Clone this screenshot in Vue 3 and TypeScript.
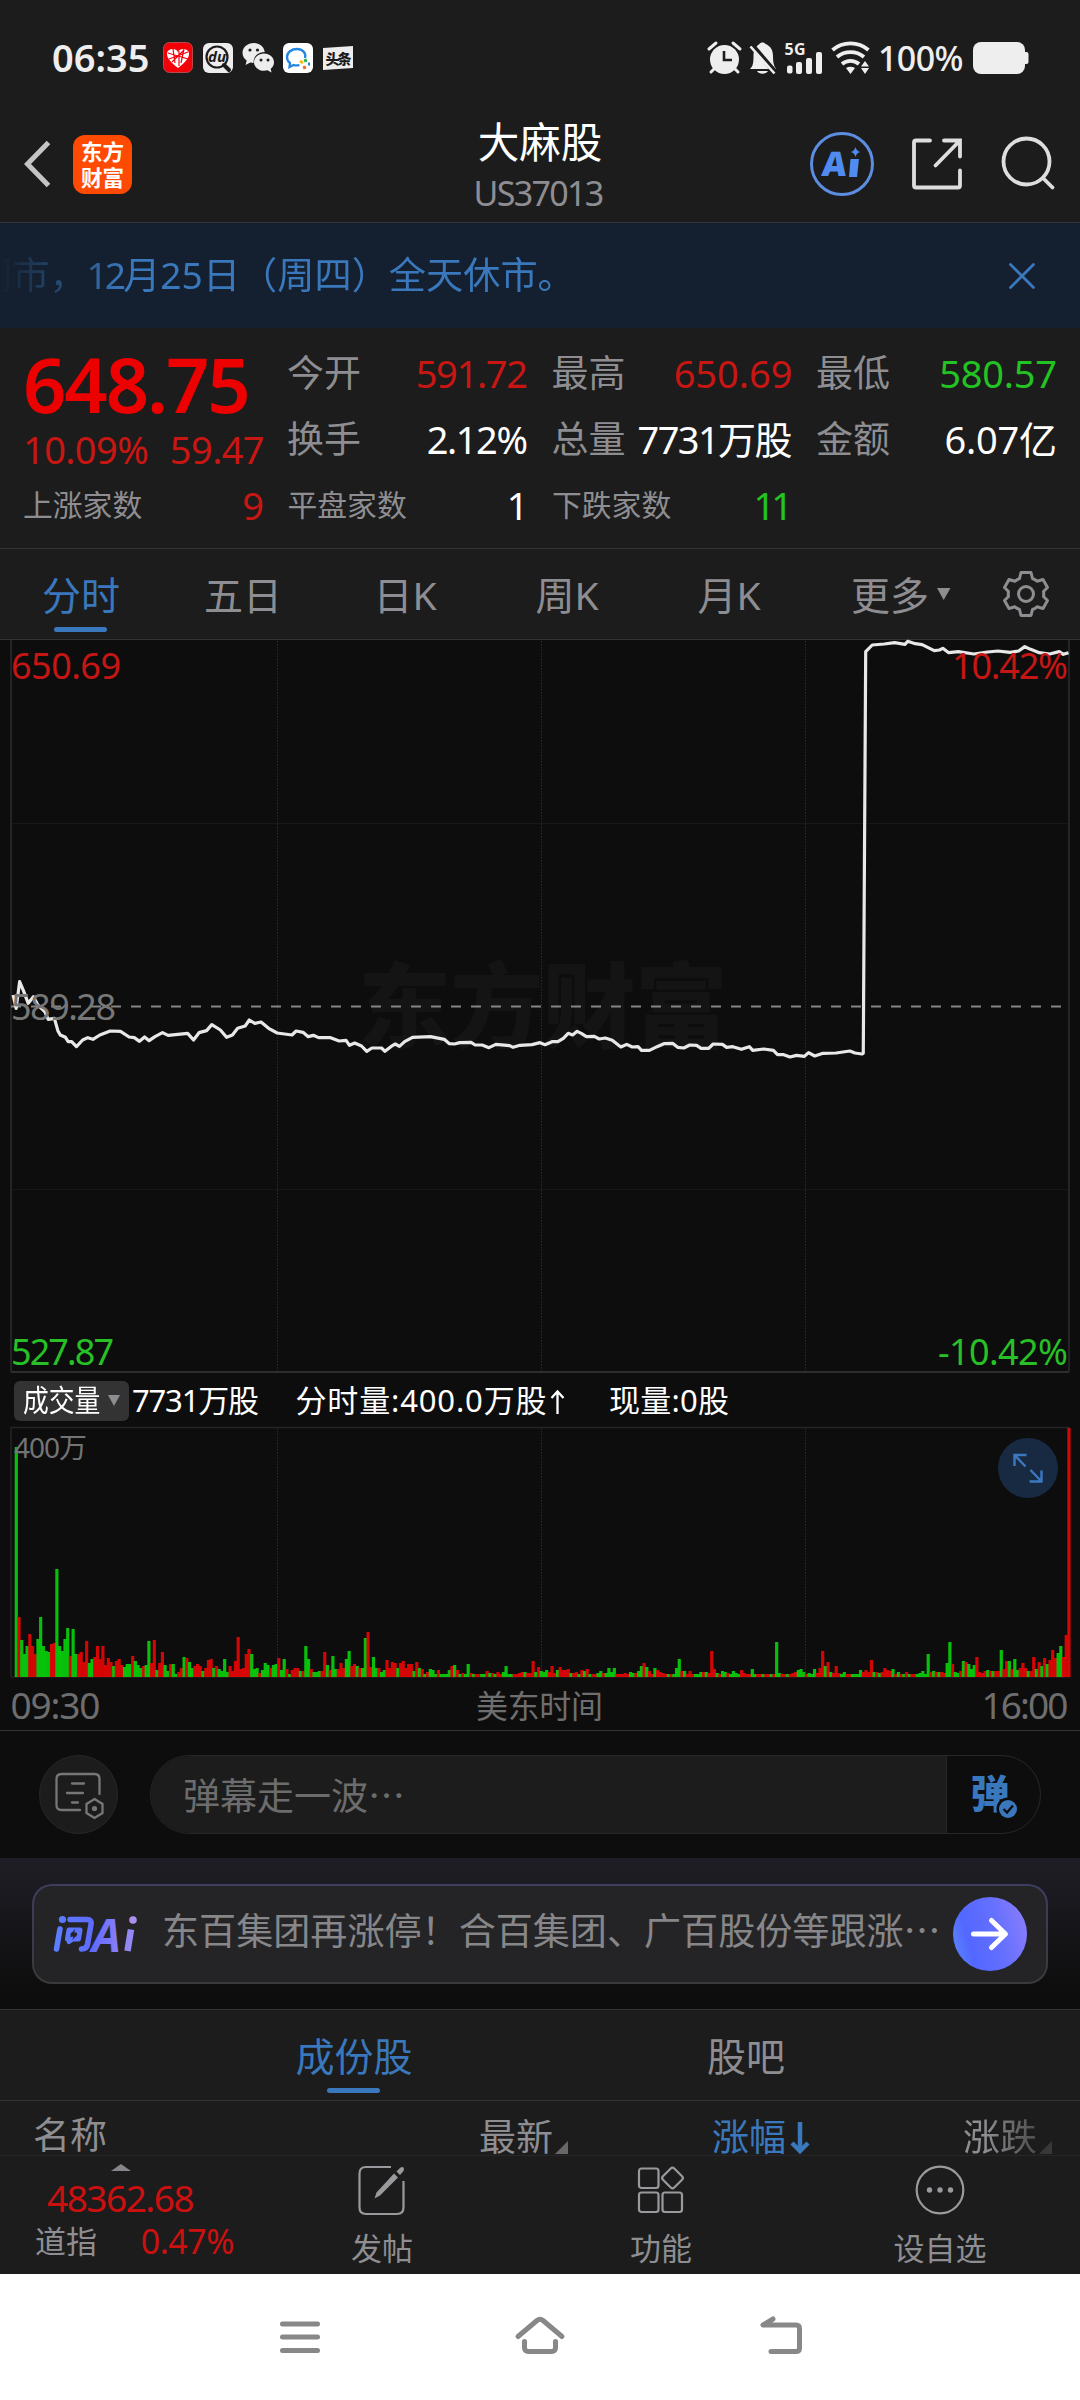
<script setup lang="ts">
interface Cell {
  label: string
  value: string
  tone: 'up' | 'down' | 'flat'
  spacing: number
}

const cells: Cell[] = [
  { label: '今开', value: '591.72', tone: 'up', spacing: -1.3 },
  { label: '最高', value: '650.69', tone: 'up', spacing: 0 },
  { label: '最低', value: '580.57', tone: 'down', spacing: -0.2 },
  { label: '换手', value: '2.12%', tone: 'flat', spacing: -1.4 },
  { label: '总量', value: '7731万股', tone: 'flat', spacing: -1.6 },
  { label: '金额', value: '6.07亿', tone: 'flat', spacing: -0.2 },
]

const counts: Cell[] = [
  { label: '上涨家数', value: '9', tone: 'up', spacing: 0 },
  { label: '平盘家数', value: '1', tone: 'flat', spacing: 0 },
  { label: '下跌家数', value: '11', tone: 'down', spacing: -4 },
]

/* Trailing letter-spacing is cancelled so values stay flush right. */
const fit = (c: Cell) => ({ letterSpacing: `${c.spacing}px`, marginRight: `${-c.spacing}px` })

const periods: string[] = ['分时', '五日', '日K', '周K', '月K']

/* Intraday price path before the jump, in thirds of a pixel. */
const sessionLow =
  '38,195 47,235 57,155 68,182 82,220 97,200 110,225 130,245 140,268 158,265 168,302 175,315 190,322 198,335 208,335 222,350 240,330 255,323 270,328 290,315 320,303 350,304 375,321 390,323 405,334 420,321 433,332 450,320 472,308 488,316 545,310 562,330 578,308 600,302 615,284 640,300 658,322 675,315 690,295 712,288 724,270 740,280 758,276 780,295 805,309 848,315 860,303 880,307 895,320 910,316 925,323 960,323 985,333 1005,331 1015,346 1030,339 1050,348 1065,364 1080,354 1108,354 1118,364 1135,350 1148,342 1160,349 1175,335 1198,322 1250,320 1290,328 1305,341 1320,342 1335,338 1368,337 1380,345 1400,345 1420,353 1440,343 1480,347 1490,352 1510,346 1545,344 1568,338 1583,344 1603,335 1620,335 1636,325 1650,310 1663,315 1676,304 1688,310 1703,320 1726,319 1740,327 1758,324 1778,331 1803,351 1820,343 1836,351 1853,350 1863,361 1886,361 1908,350 1928,341 1953,340 1968,352 1986,354 2003,345 2023,346 2036,355 2058,355 2071,342 2098,343 2110,352 2128,350 2153,358 2176,350 2186,361 2218,357 2246,361 2258,374 2276,374 2294,381 2313,376 2336,379 2348,368 2366,378 2390,370 2428,369 2468,363 2483,369 2503,372 2507,370'
const sessionHigh =
  '2514,-835 2533,-855 2568,-858 2598,-862 2628,-857 2636,-866 2658,-859 2678,-856 2713,-838 2728,-840 2738,-845 2755,-832 2783,-835 2828,-828 2868,-834 2898,-837 2933,-833 2958,-837 2976,-850 2993,-842 3018,-832 3048,-828 3076,-835 3088,-827 3103,-832'
const priceLine = `${sessionLow} ${sessionHigh}`

/* One entry per minute: direction followed by bar height. */
const minutes =
  'g230 r60 g37 g23 g31 r43 r31 r23 g38 g60 g31 g26 g25 r33 r34 g108 g31 g26 g38 g49 r21 g48 g23 r23 r25 r15 r36 g14 g18 r20 r31 r18 r31 r12 r19 r15 g11 r16 r18 r12 g10 g13 g13 r21 g16 g12 g9 r11 g12 g36 r14 r37 g7 r14 r25 g12 g6 r13 g13 g3 r5 r9 g20 r19 g15 g9 r11 r13 r11 g6 r9 r17 r18 g9 r11 g8 g6 g18 g5 r11 r6 r16 r40 r8 r9 r23 r28 g23 g8 g9 r4 g7 g14 g12 r9 g12 g13 r19 g7 g18 r8 g3 r7 r9 r9 g6 r6 g31 g18 r8 g5 g5 g6 r6 r25 g12 r7 g21 g8 r8 r14 r9 g18 g26 r11 r13 g11 r9 g9 g39 r45 r10 g20 g9 r9 g5 g7 r17 r9 r15 r14 g9 r14 r16 r9 r13 r13 g6 r15 g9 r8 g3 r5 g8 g7 g3 r7 g3 g3 g3 g7 r11 g12 r7 g3 r4 g3 g13 r4 g3 r3 r3 g3 g3 r6 g4 r4 g3 r5 r3 g5 g11 g3 g3 r3 r3 r4 r5 g5 r4 r4 r16 g5 r10 g6 g5 g7 r5 r11 r4 g7 r10 r7 r7 r8 g4 r4 r5 g3 r7 g6 r8 g3 r3 r3 g4 g6 r4 g4 g9 g5 g9 r3 r3 r3 r4 r3 g5 g4 r4 g6 g11 r14 g10 r6 r3 g9 r7 r5 r4 r3 g3 r3 g3 g9 g18 r6 g6 r3 r6 r3 g3 g3 g5 r5 g5 r4 r26 r8 g4 r3 g6 g5 r4 g3 g6 g4 g3 r7 r4 r3 r3 g8 g3 r3 r3 g3 r3 r3 g3 r3 g35 g4 r3 r3 g3 r3 r4 r5 g7 g8 g5 r3 g4 g3 g8 r4 r9 r26 g11 r15 g5 r4 r11 r4 g3 g5 r3 r3 g3 g3 g3 g7 r5 r7 r5 r17 g5 r5 g4 r5 r9 r7 r6 g8 r3 g5 r3 g3 r5 g3 r3 r3 g3 g4 g6 g3 g23 r5 g6 r5 g5 r5 r4 g14 g35 r13 g5 g4 r6 g16 r15 g13 g8 g12 r20 r5 r4 r6 g7 r6 g6 r6 r6 g27 r8 r16 g16 r8 g18 g7 r9 r14 r9 g6 r6 r20 g8 r15 g11 r19 g13 r17 r27 r19 g24 g31 r20 r42 r249'

const bars = minutes.split(' ').map((m, i) => ({
  x: 14.7 + i * 2.706,
  h: Number(m.slice(1)),
  fill: m[0] === 'g' ? '#08d30b' : '#e80503',
}))

const gridX: number[] = [277.5, 541.5, 805.5]
</script>

<template>
  <div class="screen">
    <div class="status">
      <span class="clock">06:35</span>
      <svg class="apps" width="190" height="32" viewBox="0 0 190 32">
        <rect x="0.5" y="0.5" width="29" height="30" rx="6" fill="#f40009" stroke="#b54a4a" />
        <path d="M15 26C9 21 4 17 4 12c0-5 8-7 11-2 3-5 11-3 11 2 0 5-5 9-11 14z" fill="#fff" />
        <path d="M5 11l20 6M6 17l19-7M10 7l2 14M16 9v15M21 7l-3 14M9 20l12-12" stroke="#f40009" stroke-width="1.2" fill="none" />
        <rect x="40" y="1" width="30" height="30" rx="6" fill="#ededed" />
        <circle cx="54" cy="15" r="10.5" fill="none" stroke="#1c1c1c" stroke-width="2.2" />
        <path d="M61 23l5 5" stroke="#1c1c1c" stroke-width="4" stroke-linecap="round" />
        <text x="54" y="20" text-anchor="middle" class="du">du</text>
        <path d="M91 1c-6.500 0-11.500 4.300-11.500 9.800 0 3.200 1.600 5.900 4.200 7.700L82.500 23l4.800-2.500c1 .3 2.200.5 3.400.5-.8-6 4-10.700 11-10.900C101 4.500 96.500 1 91 1z" fill="#ededed" />
        <path d="M101 11.500c-5.500 0-10 4-10 8.700s4.500 8.600 10 8.600c1.300 0 2.500-.2 3.500-.5l4 2.200-.8-3.700c2-1.600 3.300-3.900 3.300-6.600 0-4.800-4.500-8.700-10-8.700z" fill="#ededed" />
        <g fill="#1c1c1c"><circle cx="87" cy="8" r="1.600" /><circle cx="94.500" cy="8" r="1.600" /><circle cx="98" cy="18" r="1.500" /><circle cx="105" cy="18" r="1.500" /></g>
        <rect x="120" y="1" width="30" height="30" rx="6" fill="#fff" />
        <path d="M142 16c1.500-5-2.500-9-8-9-5.500 0-10 3.300-10 8 0 3 1.500 5 3 6l-.5 4 4-2c2 .6 4 .6 6 0" fill="none" stroke="#2486e0" stroke-width="2.300" />
        <path d="M137 19l3 2" stroke="#f9b916" stroke-width="3" /><path d="M142 17l1 3" stroke="#25b14b" stroke-width="3" /><path d="M145 22h2" stroke="#2486e0" stroke-width="3" /><path d="M141 24l1 3" stroke="#ef6a2c" stroke-width="3" />
        <path d="M160 6l30-2v22l-30 2z" fill="#ededed" />
        <text x="162.500" y="21.500" class="tt" textLength="26">头条</text>
      </svg>
      <svg class="sys" width="162" height="34" viewBox="708 42 162 34">
        <g fill="#eee">
          <circle cx="724.500" cy="60.500" r="14.500" />
          <path d="M709 50l7-6M740 50l-7-6M715 69l-4 4M734 69l4 4" stroke="#eee" stroke-width="3" stroke-linecap="round" />
          <path d="M724 52v9h8" stroke="#1c1c1c" stroke-width="2.600" fill="none" />
          <path d="M750 70c3-3 3.500-6 3.500-13 0-7 3-10 6-12 1-2 5-2 6 0 5 2 7.500 6 7.500 12 0 7 1 10 3 13zM757 72h11c-2 3.500-9 3.500-11 0z" />
          <path d="M751 45l24 28" stroke="#1c1c1c" stroke-width="5" /><path d="M750.500 47.500l24 27" stroke="#eee" stroke-width="2.600" />
          <rect x="787" y="66.500" width="5.500" height="8" rx="2" /><rect x="796" y="63" width="6" height="12" rx="2" /><rect x="806" y="59" width="6" height="16" rx="2" /><rect x="816" y="53" width="6" height="22" rx="2" />
          <text x="784.500" y="56" class="g5" textLength="21">5G</text>
        </g>
        <g fill="none" stroke="#eee" stroke-width="3.800"><path d="M832.500 51a28 28 0 0 1 36 0M837 58a21 21 0 0 1 27 0M842 65a13 13 0 0 1 17 0" /></g>
        <path d="M846 69q4.500-2.500 9 0l-4.500 6zM865 62l4 5.500h-8zM861 69h8l-4 6z" fill="#eee" />
      </svg>
      <span class="pct">100%</span>
      <svg class="batt" width="56" height="32" viewBox="0 0 56 32"><rect width="52" height="32" rx="8" fill="#eee" /><rect x="46" y="10" width="9.500" height="12" rx="2" fill="#eee" /></svg>
    </div>

    <header class="head">
      <div class="head-left">
        <svg width="30" height="50" viewBox="0 0 30 50"><path d="M26.500 3.500L5.500 25l21 21.500" fill="none" stroke="#c4c4c4" stroke-width="5" /></svg>
        <div class="brand"><span>东方</span><span>财富</span></div>
      </div>
      <div class="title">
        <div class="name">大麻股</div>
        <div class="code">US37013</div>
      </div>
      <svg class="head-icons" width="246" height="66" viewBox="810 131 246 66">
        <circle cx="842" cy="164" r="30.500" fill="none" stroke="#5b8de0" stroke-width="3" />
        <text x="0" y="0" transform="translate(821 175.500) skewX(-6)" class="ai">A</text>
        <path d="M850.500 159h8.500l-2 18h-8z" fill="#508bf0" />
        <path d="M855.500 147q1 4 4.500 5-3.500 1-4.500 5-1-4-4.500-5 3.500-1 4.500-5z" fill="#508bf0" />
        <g fill="none" stroke="#dedede" stroke-width="3.800" stroke-linecap="round">
          <path d="M930 140.500h-14q-2 0-2 2v43q0 2 2 2h42q2 0 2-2v-15M944 140.500h16v16M960 140.500l-24.500 25" />
          <circle cx="1026.500" cy="161.500" r="23" /><path d="M1043 178l9.500 9.500" />
        </g>
      </svg>
    </header>

    <div class="notice">
      <div class="ticker">闭市，<i class="n12">12</i>月<i class="n25">25</i>日（周四）全天休市。</div>
      <svg width="26" height="26" viewBox="0 0 26 26"><path d="M1.500 1.500l23 23M24.500 1.500l-23 23" stroke="#3a78bd" stroke-width="2.800" stroke-linecap="round" /></svg>
    </div>

    <section class="quote">
      <div class="main">
        <div class="price">648.75</div>
        <div class="change"><span>10.09%</span><span>59.47</span></div>
      </div>
      <div class="cells">
        <div v-for="c in cells" :key="c.label" class="cell">
          <span class="lab">{{ c.label }}</span>
          <span :class="['val', c.tone]" :style="fit(c)">{{ c.value }}</span>
        </div>
      </div>
      <div class="counts">
        <div v-for="c in counts" :key="c.label" class="cell">
          <span class="lab small">{{ c.label }}</span>
          <span :class="['val', c.tone]" :style="fit(c)">{{ c.value }}</span>
        </div>
      </div>
    </section>

    <nav class="periods">
      <div v-for="(p, i) in periods" :key="p" :class="['period', { on: i === 0 }]">{{ p }}</div>
      <div class="period more">更多<svg width="14" height="12" viewBox="0 0 14 12"><path d="M0 0h13.500L6.700 12z" fill="#8e8e92" /></svg></div>
      <div class="gear">
        <svg width="48" height="50" viewBox="-24 -25 48 50" fill="none" stroke="#8e8e92" stroke-width="3" stroke-linejoin="round">
          <path d="M-5-21.500H5L6.500-15.500Q9-14.500 11-12.800L17-14.500 21.500-6.500 17.500-2.500Q18 0 17.500 2.500L21.500 6.500 17 14.500 11 12.800Q9 14.500 6.500 15.500L5 21.500H-5L-6.500 15.500Q-9 14.500-11 12.800L-17 14.500-21.500 6.500-17.500 2.500Q-18 0-17.500-2.500L-21.500-6.500-17-14.500-11-12.800Q-9-14.500-6.500-15.500Z" />
          <circle r="7.500" />
        </svg>
      </div>
    </nav>

    <svg class="price-chart" width="1080" height="734" viewBox="0 640 1080 734">
      <text x="358" y="1041" class="mark" textLength="370">东方财富</text>
      <g stroke="#2b2b2b" stroke-width="1" stroke-dasharray="1.500 1.500">
        <path v-for="x in gridX" :key="x" :d="`M${x} 641V1372`" />
      </g>
      <path d="M12 823.500H1068M12 1189.500H1068" stroke="#181818" />
      <path d="M11 640V1372M1069 640V1372" stroke="#242424" stroke-width="2" />
      <path d="M11 1372H1069" stroke="#2e2e2e" stroke-width="2" />
      <path d="M11 1006.500H1063" stroke="#858585" stroke-width="2.200" stroke-dasharray="10 10" />
      <g transform="translate(0 930) scale(.34435 .33333)">
        <polyline :points="priceLine" class="line" vector-effect="non-scaling-stroke" />
      </g>
      <g class="axis">
        <text x="11" y="678.500" fill="#c51613" textLength="110">650.69</text>
        <text x="952" y="678.500" fill="#c51613" textLength="116">10.42%</text>
        <text x="11" y="1020" fill="#777" textLength="105">589.28</text>
        <text x="11" y="1364.500" fill="#27c127" textLength="103">527.87</text>
        <text x="938" y="1364.500" fill="#27c127" textLength="130">-10.42%</text>
      </g>
    </svg>

    <div class="vol-head">
      <div class="pick">
        <span class="pick-text">成交量</span>
        <svg width="12" height="11" viewBox="0 0 12 11"><path d="M0 0h12L6 11z" fill="#8e8e92" /></svg>
      </div>
      <svg width="600" height="44" viewBox="131 1379 600 44" class="vol-text">
        <text x="132" y="1412" textLength="127">7731万股</text>
        <text x="295.500" y="1412" textLength="251">分时量:400.0万股</text>
        <path d="M557.500 1414v-22M551.500 1398l6-6.500 6 6.500" fill="none" stroke="#fff" stroke-width="2.300" />
        <text x="609" y="1412" textLength="120">现量:0股</text>
      </svg>
    </div>

    <svg class="vol-chart" width="1080" height="304" viewBox="0 1427 1080 304">
      <g stroke="#2b2b2b" stroke-width="1" stroke-dasharray="1.500 1.500">
        <path v-for="x in gridX" :key="x" :d="`M${x} 1428V1677`" />
      </g>
      <path d="M11 1677V1427.500H1069V1677" fill="none" stroke="#252525" stroke-width="1.500" />
      <path d="M11 1677H1069" stroke="#3a2020" stroke-width="1" />
      <rect v-for="(b, i) in bars" :key="i" :x="b.x" :y="1677 - b.h" width="3.2" :height="b.h" :fill="b.fill" fill-opacity=".9" />
      <text x="14" y="1458" class="scale" textLength="73">400万</text>
      <circle cx="1028" cy="1468" r="30" fill="#182a42" />
      <path d="M1014.500 1466v-11h12M1014.500 1455l11 11.500M1029.500 1481.500h12v-11M1041.500 1481.500l-11-11.500" fill="none" stroke="#3b78c0" stroke-width="2.400" />
      <g class="time">
        <text x="10.500" y="1718.500" textLength="90">09:30</text>
        <text x="476" y="1717.500" class="zone" textLength="127">美东时间</text>
        <text x="981.500" y="1718.500" textLength="87">16:00</text>
      </g>
      <path d="M0 1730.500H1080" stroke="#333" />
    </svg>

    <div class="danmu">
      <div class="round">
        <svg width="50" height="48" viewBox="0 0 50 48" fill="none" stroke="#77777a" stroke-width="2.300" stroke-linecap="round">
          <path d="M26 39H7.500q-5 0-5-5V8q0-5 5-5h33q5 0 5 5v15M18 12.500h12M13 22h16M18 31.500h6" />
          <path d="M40.500 28l8 5v9l-8 5-8-5v-9z" /><circle cx="40.500" cy="37.500" r="2.600" fill="#77777a" stroke="none" />
        </svg>
      </div>
      <div class="pill">
        <div class="field">弹幕走一波…</div>
        <div class="toggle">
          <svg width="50" height="50" viewBox="0 0 50 50">
            <text x="1.500" y="38" class="dan">弹</text>
            <circle cx="39" cy="39" r="11.500" fill="#0d0d0d" /><circle cx="39" cy="39" r="9" fill="#3a78bd" />
            <path d="M34.500 39l3.500 3.500 6-7" stroke="#0d0d0d" stroke-width="2.300" fill="none" />
          </svg>
        </div>
      </div>
    </div>

    <div class="ask">
      <div class="card">
        <svg width="90" height="46" viewBox="0 0 90 46">
          <defs><linearGradient id="askInk" x1="0" x2="90" y1="0" y2="0" gradientUnits="userSpaceOnUse"><stop offset="0" stop-color="#5b80ff" /><stop offset=".45" stop-color="#5f6bff" /><stop offset="1" stop-color="#b08fee" /></linearGradient></defs>
          <g fill="none" stroke="url(#askInk)" stroke-width="6" stroke-linecap="round" stroke-linejoin="round">
            <path d="M8 18L4.500 38M18 8.500h17q5 0 4 5l-3.500 20q-.8 4.500-6 4.500" stroke-width="5.500" />
            <path d="M17 19h11l-1.500 9h-6l-3.500 2.500v-2.500h-1.500z" stroke-width="5" />
          </g>
          <path d="M23 18l-5 6h3.500l-1 5 5-6h-3.500z" fill="#242427" />
          <circle cx="10.500" cy="8.500" r="3.600" fill="url(#askInk)" />
          <text x="40" y="40.500" class="ask-a" fill="url(#askInk)">A</text>
          <path d="M79 18.500L75.500 40" stroke="#9287f3" stroke-width="6.500" /><circle cx="81" cy="9" r="3.800" fill="#ab90ee" />
        </svg>
        <div class="ask-text">东百集团再涨停！合百集团、广百股份等跟涨…</div>
        <div class="go"><svg width="40" height="36" viewBox="0 0 40 36"><path d="M3.500 18h31M21.500 4.500L35.500 18l-14 13.500" fill="none" stroke="#fff" stroke-width="5" stroke-linecap="round" stroke-linejoin="round" /></svg></div>
      </div>
    </div>

    <nav class="boards">
      <div class="board on">成份股</div>
      <div class="board">股吧</div>
    </nav>

    <div class="cols">
      <span class="c-name">名称</span>
      <span class="c-last">最新</span>
      <svg class="tri" width="13" height="13" viewBox="0 0 13 13"><path d="M13 0v13H0z" fill="#68686b" /></svg>
      <span class="c-pct">涨幅</span>
      <svg class="down-arrow" width="20" height="34" viewBox="0 0 20 34"><path d="M10 1v28M2 22l8 8 8-8" fill="none" stroke="#3a78bd" stroke-width="4.500" /></svg>
      <span class="c-chg">涨跌</span>
      <svg class="tri" width="13" height="13" viewBox="0 0 13 13"><path d="M13 0v13H0z" fill="#38383a" /></svg>
    </div>

    <footer class="dock">
      <div class="index">
        <svg class="caret" width="20" height="7" viewBox="0 0 20 7"><path d="M10 0l10 7H0z" fill="#85858a" /></svg>
        <div class="idx-val">48362.68</div>
        <div class="idx-row"><span>道指</span><em>0.47%</em></div>
      </div>
      <div class="action a1">
        <svg width="50" height="52" viewBox="0 0 50 52"><path d="M34 3H9Q2.500 3 2.500 9.500v34Q2.500 50 9 50h31q6.500 0 6.500-6.500V17" fill="none" stroke="#9a9a9e" stroke-width="2.200" /><path d="M17.500 34.500l2-6L37 9.500l4 4L23 31.500zM39.500 7.500l4-4q2-1 3 0t0 3.500l-3.500 4z" fill="#9a9a9e" /></svg>
        <span>发帖</span>
      </div>
      <div class="action a2">
        <svg width="50" height="52" viewBox="0 0 50 52" fill="none" stroke="#9a9a9e" stroke-width="2.200"><rect x="3" y="4.500" width="19.500" height="19.500" rx="2.500" /><rect x="3" y="28.500" width="19.500" height="19.500" rx="2.500" /><rect x="26.500" y="28.500" width="19.500" height="19.500" rx="2.500" /><rect x="28.500" y="6" width="16" height="16" rx="2.500" transform="rotate(45 36.500 14)" /></svg>
        <span>功能</span>
      </div>
      <div class="action a3">
        <svg width="50" height="52" viewBox="0 0 50 52"><circle cx="25" cy="26" r="23.300" fill="none" stroke="#9a9a9e" stroke-width="2.200" /><g fill="#9a9a9e"><circle cx="14.500" cy="26" r="2.700" /><circle cx="25" cy="26" r="2.700" /><circle cx="35.500" cy="26" r="2.700" /></g></svg>
        <span>设自选</span>
      </div>
    </footer>

    <div class="sysnav">
      <svg width="40" height="34" viewBox="0 0 40 34"><path d="M2.500 4h35M2.500 17h35M2.500 30.500h35" class="ns" /></svg>
      <svg width="50" height="38" viewBox="0 0 50 38"><path d="M3 20.500L22 4.500Q25 2 28 4.500L47 20.500M9.500 25.500v6q0 4 4 4h23q4 0 4-4v-6" class="ns" /></svg>
      <svg width="44" height="38" viewBox="0 0 44 38"><path d="M13 3L3 9h33q3.500 0 3.500 3.500V32q0 3.500-3.500 3.500H11" class="ns" /></svg>
    </div>
  </div>
</template>

<style>
body {
  margin: 0;
  background: #1c1c1c;
}
</style>

<style scoped>
.screen {
  width: 1080px;
  height: 2400px;
  overflow: hidden;
  display: flex;
  flex-direction: column;
  background: #1c1c1c;
  color: #8e8e92;
  font-family: "Noto Sans", "Noto Sans CJK SC", sans-serif;
}
.screen > * {
  flex: none;
  box-sizing: border-box;
}
svg {
  display: block;
  flex: none;
  overflow: visible;
}
.status {
  height: 116px;
  display: flex;
  align-items: center;
  color: #eee;
}
.clock {
  width: 111px;
  margin-left: 52px;
  font-size: 38px;
  font-weight: 600;
  line-height: 46px;
  padding-bottom: 2px;
}
.sys {
  margin-left: 355px;
}
.du {
  font: italic 700 15px "Noto Sans", sans-serif;
  fill: #1c1c1c;
}
.tt {
  font: 900 14px "Noto Sans CJK SC", sans-serif;
  fill: #1c1c1c;
}
.g5 {
  font: 700 16px "Noto Sans", sans-serif;
}
.pct {
  width: 95px;
  padding-left: 8px;
  box-sizing: border-box;
  font-size: 34px;
  font-weight: 500;
  letter-spacing: -0.6px;
  line-height: 48px;
}
.batt {
  margin-left: 8px;
}
.head {
  height: 107px;
  border-bottom: 1px solid #333538;
  display: grid;
  grid-template-columns: 400px 280px 400px;
}
.head-left {
  display: flex;
  align-items: center;
  padding-left: 22px;
  height: 96px;
}
.brand {
  width: 59px;
  height: 59px;
  margin-left: 21px;
  border-radius: 12px;
  background: #ff4a03;
  display: flex;
  flex-direction: column;
  align-items: center;
  justify-content: center;
  color: #fff;
  font: 700 21.500px/26px "Noto Sans CJK SC", sans-serif;
}
.title {
  text-align: center;
}
.name {
  color: #fff;
  font-size: 41.500px;
  line-height: 52px;
}
.code {
  margin: 1px 4px 0 0;
  font-size: 34px;
  line-height: 48px;
  letter-spacing: -1.7px;
}
.head-icons {
  margin: 15px 0 0 130px;
}
.ai {
  font: 900 34px "Noto Sans", sans-serif;
  fill: #508bf0;
}
.notice {
  height: 105px;
  background: #14202f;
  display: flex;
  align-items: center;
  justify-content: space-between;
  padding-right: 45px;
}
.ticker {
  margin: -2px 0 0 -25px;
  white-space: nowrap;
  color: #3a78bd;
  font-size: 37.200px;
  line-height: 50px;
  -webkit-mask-image: linear-gradient(90deg, transparent 25px, #000 150px);
  mask-image: linear-gradient(90deg, transparent 25px, #000 150px);
}
.ticker i {
  font-style: normal;
}
.n12 {
  letter-spacing: -3px;
}
.quote {
  height: 221px;
  border-bottom: 1px solid #333;
  padding: 12px 23px 0;
  display: grid;
  grid-template-columns: 264px 770px;
  grid-template-rows: 132px 66px;
}
.price {
  color: #ec0000;
  font-size: 76px;
  font-weight: 600;
  line-height: 88px;
  letter-spacing: -2.100px;
}
.change {
  display: flex;
  justify-content: space-between;
  width: 241px;
  color: #c81613;
  font-size: 38px;
  line-height: 42px;
  letter-spacing: -0.600px;
}
.cells {
  display: grid;
  grid-template-columns: repeat(3, 241px);
  grid-template-rows: 66px 66px;
  column-gap: 23.500px;
}
.counts {
  grid-column: 1 / 3;
  display: grid;
  grid-template-columns: repeat(3, 241px);
  column-gap: 23.500px;
}
.cell {
  display: flex;
  justify-content: space-between;
  line-height: 66px;
  white-space: nowrap;
}
.lab {
  font-size: 37px;
}
.lab.small {
  font-size: 29.800px;
}
.val {
  font-size: 38px;
}
.up {
  color: #c81613;
}
.down {
  color: #22c322;
}
.flat {
  color: #fff;
}
.periods {
  height: 91px;
  border-bottom: 1px solid #333;
  display: flex;
}
.period {
  width: 162px;
  font-size: 39px;
  line-height: 91px;
  text-align: center;
  position: relative;
}
.on {
  color: #3a78bd;
}
.on::after {
  content: "";
  position: absolute;
  left: 50%;
  bottom: 7px;
  width: 53px;
  height: 5px;
  margin-left: -27px;
  border-radius: 3px;
  background: #3a78bd;
}
.more {
  box-sizing: border-box;
  padding-left: 20px;
  display: flex;
  align-items: center;
  justify-content: center;
  gap: 8px;
}
.gear {
  width: 108px;
  display: flex;
  align-items: center;
  justify-content: center;
}
.price-chart,
.vol-chart {
  background: #0d0d0d;
}
.mark {
  font: 900 93px "Noto Sans CJK SC", sans-serif;
  fill: #141414;
}
.line {
  fill: none;
  stroke: #e8e8e8;
  stroke-width: 3.200px;
  stroke-linejoin: round;
}
.axis {
  font-size: 36px;
}
.vol-head {
  height: 53px;
  background: #0d0d0d;
  display: flex;
  align-items: center;
  padding-left: 14px;
}
.pick {
  width: 115px;
  height: 40px;
  border-radius: 6px;
  background: #333;
  display: flex;
  align-items: center;
}
.pick-text {
  width: 90px;
  margin: -2px -5px 0 9px;
  font-size: 30px;
  line-height: 40px;
  color: #fff;
  transform: scaleX(0.86);
  transform-origin: 0 50%;
}
.vol-text {
  margin-left: 2px;
  font-size: 31px;
  fill: #fff;
}
.scale {
  font-size: 28px;
  fill: #747474;
}
.time {
  font-size: 37px;
  fill: #6e6e6e;
}
.zone {
  font-size: 32px;
}
.danmu {
  height: 127px;
  background: #0d0d0d;
  display: flex;
  align-items: center;
  padding-left: 39px;
}
.round {
  width: 79px;
  height: 79px;
  box-sizing: border-box;
  border: 1px solid #272727;
  border-radius: 50%;
  background: #1c1c1c;
  display: flex;
  align-items: center;
  justify-content: center;
}
.pill {
  width: 891px;
  height: 79px;
  margin-left: 32px;
  box-sizing: border-box;
  border: 1px solid #272727;
  border-radius: 40px;
  overflow: hidden;
  display: flex;
}
.field {
  flex: 1;
  background: #1c1c1c;
  border-right: 1px solid #272727;
  padding-left: 32px;
  color: #6c6c6c;
  font: 37px/76px "Noto Sans CJK SC", sans-serif;
}
.toggle {
  width: 93px;
  display: flex;
  align-items: center;
  justify-content: center;
}
.dan {
  font: 900 39px "Noto Sans CJK SC", sans-serif;
  fill: #3a78bd;
}
.ask {
  height: 152px;
  border-bottom: 1px solid #333;
  background: linear-gradient(#1f1e26, #0d0d0d 90%);
  padding: 26px 32px 0;
}
.card {
  width: 1016px;
  height: 100px;
  box-sizing: border-box;
  border: 2px solid transparent;
  border-radius: 20px;
  background: linear-gradient(#242427, #242427) padding-box, linear-gradient(#3d3e62, #3a3a3c 90%) border-box;
  display: flex;
  align-items: center;
  padding-left: 18px;
}
.ask-a {
  font: italic 700 46px "Noto Sans", sans-serif;
}
.ask-text {
  width: 791px;
  margin: -10px 0 0 20px;
  white-space: nowrap;
  color: #87878a;
  font: 37.100px/50px "Noto Sans CJK SC", sans-serif;
}
.go {
  width: 74px;
  height: 74px;
  border-radius: 50%;
  background: linear-gradient(75deg, #5b8cff, #5367ff 25%, #6570ff 60%, #8f80fb);
  display: flex;
  align-items: center;
  justify-content: center;
}
.boards {
  height: 91px;
  border-bottom: 1px solid #333;
  display: flex;
  padding-left: 158px;
}
.board {
  position: relative;
  width: 392px;
  text-align: center;
  font-size: 39px;
  line-height: 91px;
}
.cols {
  height: 55px;
  border-bottom: 1px solid #272727;
  display: flex;
  align-items: flex-start;
  font-size: 37px;
  line-height: 68px;
}
.cols span {
  width: 74px;
  flex: none;
}
.c-name {
  margin-left: 33px;
}
.c-last {
  margin: 2px 0 0 372px;
}
.tri {
  margin: 40px 0 0 2px;
}
.c-pct {
  margin: 2px 0 0 144px;
  color: #3a78bd;
}
.down-arrow {
  margin: 20px 0 0 4px;
}
.c-chg {
  margin: 2px 0 0 153px;
  background: linear-gradient(90deg, #8e8e92 30%, #4c4c4e);
  -webkit-background-clip: text;
  background-clip: text;
  color: transparent;
}
.dock {
  height: 118px;
  display: flex;
}
.index {
  width: 241px;
}
.caret {
  margin: 8px 0 0 111px;
}
.idx-val {
  margin: 7px 0 0 47px;
  color: #cb1010;
  font-size: 37px;
  line-height: 40px;
  letter-spacing: -1.500px;
}
.idx-row {
  display: flex;
  justify-content: space-between;
  padding: 0 7px 0 35px;
  font-size: 31px;
  line-height: 47px;
}
.idx-row em {
  font-style: normal;
  font-size: 34px;
  color: #cb1010;
  letter-spacing: -0.500px;
}
.action {
  width: 280px;
  display: flex;
  flex-direction: column;
  align-items: center;
  font-size: 31px;
  padding-top: 8px;
}
.action span {
  line-height: 40px;
  margin-top: 12px;
}
.a1 {
  position: relative;
  left: 1px;
}
.a3 {
  width: 278px;
}
.sysnav {
  height: 126px;
  background: #fff;
  display: flex;
  align-items: center;
  padding-left: 280px;
}
.sysnav svg:nth-child(2) {
  margin: -4px 0 0 195px;
}
.sysnav svg:nth-child(3) {
  margin: -4px 0 0 195px;
}
.ns {
  fill: none;
  stroke: #888;
  stroke-width: 5px;
  stroke-linecap: round;
  stroke-linejoin: round;
}
</style>
